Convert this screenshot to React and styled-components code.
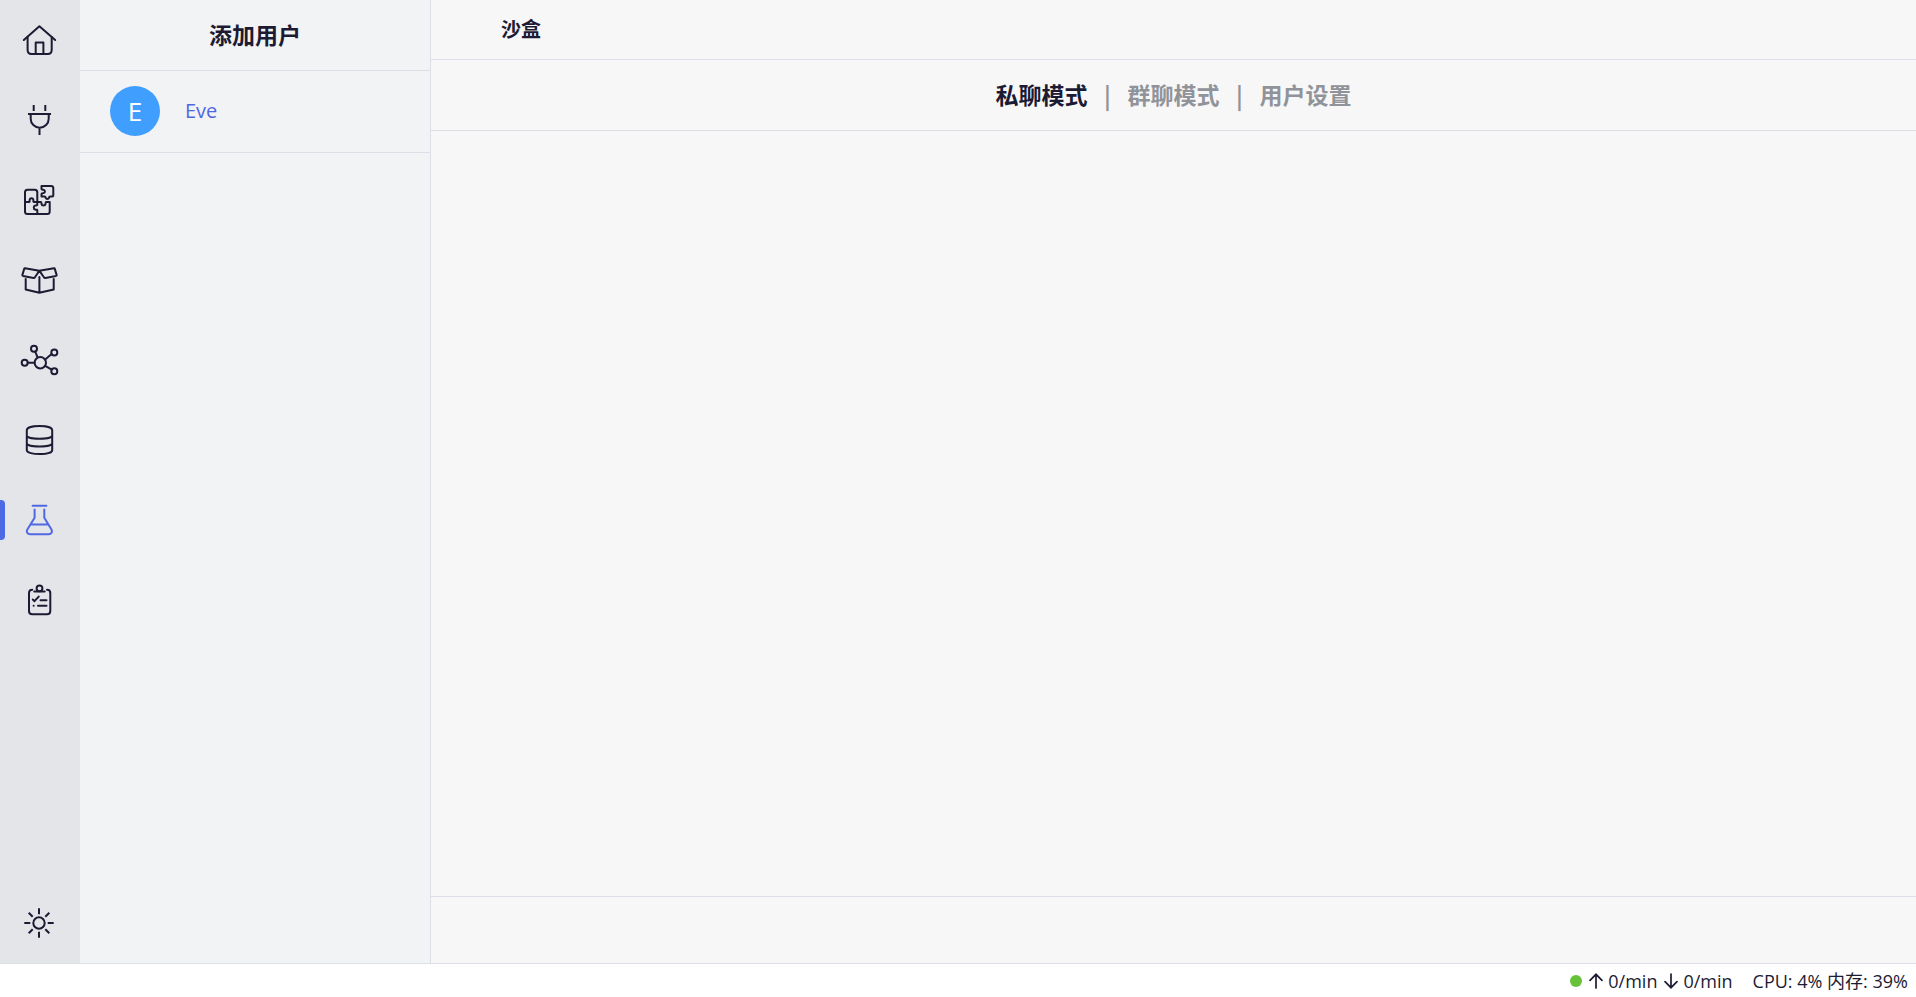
import React, { useState } from "react";
import styled, { createGlobalStyle, ThemeProvider } from "styled-components";

const theme = {
  ink: "#1c1b33",
  muted: "#909399",
  accent: "#4f68e4",
  avatar: "#409eff",
  online: "#67c23a",
  line: "#dcdfe6",
  rail: "#e4e5e9",
  panel: "#f1f3f5",
  page: "#f7f7f7",
};

const GlobalStyle = createGlobalStyle`
  * { box-sizing: border-box; }
  body {
    margin: 0;
    background: #fff;
    color: ${theme.ink};
    font-family: "Open Sans", "Noto Sans CJK SC", sans-serif;
  }
  button {
    border: 0;
    padding: 0;
    background: none;
    color: inherit;
    font: inherit;
    cursor: pointer;
  }
`;

const Shell = styled.div`
  display: flex;
  flex-direction: column;
  min-height: 100vh;
`;

const Body = styled.div`
  display: flex;
  flex: 1;
`;

const Rail = styled.nav`
  display: flex;
  flex-direction: column;
  width: 80px;
  flex-shrink: 0;
  background: ${(p) => p.theme.rail};
`;

const RailButton = styled.button`
  position: relative;
  display: flex;
  align-items: center;
  justify-content: center;
  height: 80px;
  color: ${(p) => (p.$active ? p.theme.accent : p.theme.ink)};
  &::before {
    content: "";
    display: ${(p) => (p.$active ? "block" : "none")};
    position: absolute;
    left: 0;
    top: 20px;
    width: 5px;
    height: 40px;
    border-radius: 0 4px 4px 0;
    background: ${(p) => p.theme.accent};
  }
`;

const RailSpacer = styled.div`
  flex: 1;
`;

const Glyph = styled.svg`
  display: block;
  width: ${(p) => p.$size}px;
  height: ${(p) => p.$size}px;
  fill: none;
  stroke: currentColor;
  stroke-width: 2;
  stroke-linecap: round;
  stroke-linejoin: round;
`;

const UserPanel = styled.aside`
  width: 351px;
  flex-shrink: 0;
  border-right: 1px solid ${(p) => p.theme.line};
  background: ${(p) => p.theme.panel};
`;

const AddUser = styled.button`
  display: block;
  width: 100%;
  height: 71px;
  border-bottom: 1px solid ${(p) => p.theme.line};
  font-size: 23px;
  font-weight: 700;
  line-height: 32px;
`;

const UserList = styled.ul`
  margin: 0;
  padding: 0;
  list-style: none;
`;

const UserRow = styled.button`
  display: flex;
  align-items: center;
  gap: 25px;
  width: 100%;
  height: 82px;
  padding: 15px 30px 16px;
  border-bottom: 1px solid ${(p) => p.theme.line};
  color: ${(p) => p.theme.accent};
  font-size: 20px;
  line-height: 28px;
`;

const Avatar = styled.span`
  display: flex;
  align-items: center;
  justify-content: center;
  width: 50px;
  height: 50px;
  border-radius: 50%;
  background: ${(p) => p.theme.avatar};
  color: #fff;
  font-size: 26px;
`;

const Main = styled.main`
  display: flex;
  flex: 1;
  flex-direction: column;
  min-width: 0;
  background: ${(p) => p.theme.page};
`;

const TitleBar = styled.header`
  display: flex;
  align-items: center;
  height: 60px;
  padding: 0 70px;
  border-bottom: 1px solid ${(p) => p.theme.line};
`;

const Title = styled.h1`
  margin: 0;
  font-size: 20px;
  font-weight: 700;
  line-height: 28px;
`;

const Modes = styled.div`
  display: flex;
  align-items: center;
  justify-content: center;
  height: 71px;
  border-bottom: 1px solid ${(p) => p.theme.line};
  color: ${(p) => p.theme.muted};
  font-size: 23px;
  font-weight: 700;
  line-height: 32px;
`;

const ModeButton = styled.button`
  color: ${(p) => (p.$active ? p.theme.ink : p.theme.muted)};
`;

const Divider = styled.span`
  width: 40px;
  font-family: "Noto Sans CJK SC", sans-serif;
  text-align: center;
`;

const Messages = styled.section`
  flex: 1;
`;

const Composer = styled.div`
  height: 67px;
  border-top: 1px solid ${(p) => p.theme.line};
`;

const StatusBar = styled.footer`
  display: flex;
  align-items: center;
  justify-content: flex-end;
  gap: 20px;
  height: 34px;
  padding: 0 8px;
  border-top: 1px solid ${(p) => p.theme.line};
  font-size: 18px;
  line-height: 24px;
`;

const Traffic = styled.div`
  display: flex;
  align-items: center;
  gap: 6px;
`;

const Rate = styled.span`
  display: flex;
  align-items: center;
  gap: 4px;
`;

const OnlineDot = styled.span`
  width: 12px;
  height: 12px;
  border-radius: 50%;
  background: ${(p) => p.theme.online};
`;

const icons = {
  home: (
    <>
      <path d="M3.8 20 19.4 6.2 35.2 20" />
      <path d="M7.6 17V30q0 4 4 4H27.700q4 0 4-4V17M15.700 34V22.500h7.700V34" />
    </>
  ),
  plug: (
    <path
      strokeLinecap="butt"
      d="M13.700 5v6M25.300 5v6M8 14H31M10.700 14v4.700a9 9 0 0 0 18 0V14M19.500 27.700V35"
    />
  ),
  puzzle: (
    <>
      <path d="M17.300 22V12.200q0-2.500-2.500-2.500H7.500Q5 9.700 5 12.200V31.500Q5 34 7.500 34H27.200q2.500 0 2.500-2.500V22H26.300c-1 0-.7 1-.8 2-.3 2-3.700 2-4 0-.1-1 .2-2-.8-2H14c-1 0-.5-1.200-.6-2.200-.3-2-3.500-2-3.800 0-.1 1 .4 2.200-.6 2.200H5" />
      <path d="M17.300 22v2.800c0 1-1.200.6-2.100.8-1.900.4-1.900 3.600 0 4 .9.200 2.100-.3 2.100.7V34" />
      <path d="M21.500 6H31q2.300 0 2.300 2.300v7.200q0 1-1 1H30c-1 0-.7.700-1 1.300-.6 1.500-2.700 1.500-3.300 0-.3-.6 0-1.300-1-1.300h-3.200v-2.600c0-1 1.200-.6 2-.8 1.900-.4 1.900-3 0-3.400-.8-.2-2 .2-2-.8Z" />
    </>
  ),
  box: (
    <>
      <path d="M5 8.300 19.300 10.700 14.800 17.500q-.4.600-1.200.4L3 15.900q-.8-.2-.6-1L4.200 8.900q.2-.7.800-.6ZM34 8.300 19.300 10.700 24.100 17.500q.4.600 1.200.4L36 15.900q.8-.2.600-1L34.800 8.900q-.2-.7-.8-.6Z" />
      <path d="M5.700 19V29.500l13.700 3.200 14.300-3.200V19M19.400 17V32.700" />
    </>
  ),
  network: (
    <>
      <circle cx="20.300" cy="22.700" r="5.700" />
      <circle cx="14" cy="8.700" r="3" />
      <circle cx="34.300" cy="12.400" r="3" />
      <circle cx="34.300" cy="31.300" r="3" />
      <circle cx="4.700" cy="22.700" r="3" />
      <path d="m15.200 11.700 2.400 5.600M31.600 14 25.200 19.400M31.700 29.600 25.200 25.800M7.700 22.700h6.900" />
    </>
  ),
  database: (
    <path d="M6.800 10.200c0-5.600 25.400-5.600 25.400 0V30.300c0 5-25.400 5-25.400 0ZM6.800 15.500c0 4.400 25.400 4.400 25.400 0M6.800 23.200c0 4.400 25.400 4.400 25.400 0" />
  ),
  flask: (
    <path d="M12.600 5.800H26.400M14.600 9.500v8.200L7.500 29.300c-1.500 2.500 0 5 2.800 5H28.500c2.800 0 4.300-2.500 2.800-5L24.300 17.700V9.500M10.500 24.400h18" />
  ),
  clipboard: (
    <>
      <path d="M12.300 9.700q-3.300 0-3.300 3.300V31q0 3.300 3.300 3.300H27q3.300 0 3.300-3.300V13q0-3.300-3.300-3.300" />
      <path d="M14.300 11.400h10.400M12.800 19.500l1.700 1.700 4.200-4.600M20.500 20.200h6M18 25.700h8.500M13.600 25.700h.1" />
      <circle cx="19.500" cy="8.300" r="2.900" />
    </>
  ),
  sun: (
    <>
      <circle cx="19" cy="20" r="5.700" />
      <path
        strokeLinecap="butt"
        d="M19 5.300v6M19 28.700v6M4.300 20h6M27.700 20h6M8.700 9.700l4 4M29.300 9.700l-4 4M8.700 30.300l4-4M29.300 30.300l-4-4"
      />
    </>
  ),
};

function Icon({ name }) {
  return (
    <Glyph $size={40} viewBox="0 0 40 40" aria-hidden="true">
      {icons[name]}
    </Glyph>
  );
}

function Arrow({ down }) {
  return (
    <Glyph $size={16} viewBox="0 0 16 16" aria-hidden="true">
      <path
        strokeWidth="1.700"
        strokeLinejoin="miter"
        d={down ? "M8 1V14.500M2 8.700l6 6 6-6" : "M8 15V1.500M2 7.300l6-6 6 6"}
      />
    </Glyph>
  );
}

const pages = [
  ["home", "主页"],
  ["plug", "连接"],
  ["puzzle", "插件"],
  ["box", "商店"],
  ["network", "网络"],
  ["database", "数据库"],
  ["flask", "沙盒"],
  ["clipboard", "日志"],
];

const modes = ["私聊模式", "群聊模式", "用户设置"];
const users = ["Eve"];

export default function App() {
  const [page, setPage] = useState("flask");
  const [mode, setMode] = useState(modes[0]);

  return (
    <ThemeProvider theme={theme}>
      <GlobalStyle />
      <Shell>
        <Body>
          <Rail>
            {pages.map(([name, label]) => (
              <RailButton
                key={name}
                type="button"
                aria-label={label}
                $active={page === name}
                onClick={() => setPage(name)}
              >
                <Icon name={name} />
              </RailButton>
            ))}
            <RailSpacer />
            <RailButton type="button" aria-label="主题">
              <Icon name="sun" />
            </RailButton>
          </Rail>
          <UserPanel>
            <AddUser type="button">添加用户</AddUser>
            <UserList>
              {users.map((name) => (
                <li key={name}>
                  <UserRow type="button">
                    <Avatar>{name[0]}</Avatar>
                    <span>{name}</span>
                  </UserRow>
                </li>
              ))}
            </UserList>
          </UserPanel>
          <Main>
            <TitleBar>
              <Title>沙盒</Title>
            </TitleBar>
            <Modes>
              {modes.map((label, i) => (
                <React.Fragment key={label}>
                  {i > 0 && <Divider>|</Divider>}
                  <ModeButton
                    type="button"
                    $active={mode === label}
                    onClick={() => setMode(label)}
                  >
                    {label}
                  </ModeButton>
                </React.Fragment>
              ))}
            </Modes>
            <Messages />
            <Composer />
          </Main>
        </Body>
        <StatusBar>
          <Traffic>
            <OnlineDot />
            <Rate>
              <Arrow />
              0/min
            </Rate>
            <Rate>
              <Arrow down />
              0/min
            </Rate>
          </Traffic>
          <span>CPU: 4% 内存: 39%</span>
        </StatusBar>
      </Shell>
    </ThemeProvider>
  );
}
